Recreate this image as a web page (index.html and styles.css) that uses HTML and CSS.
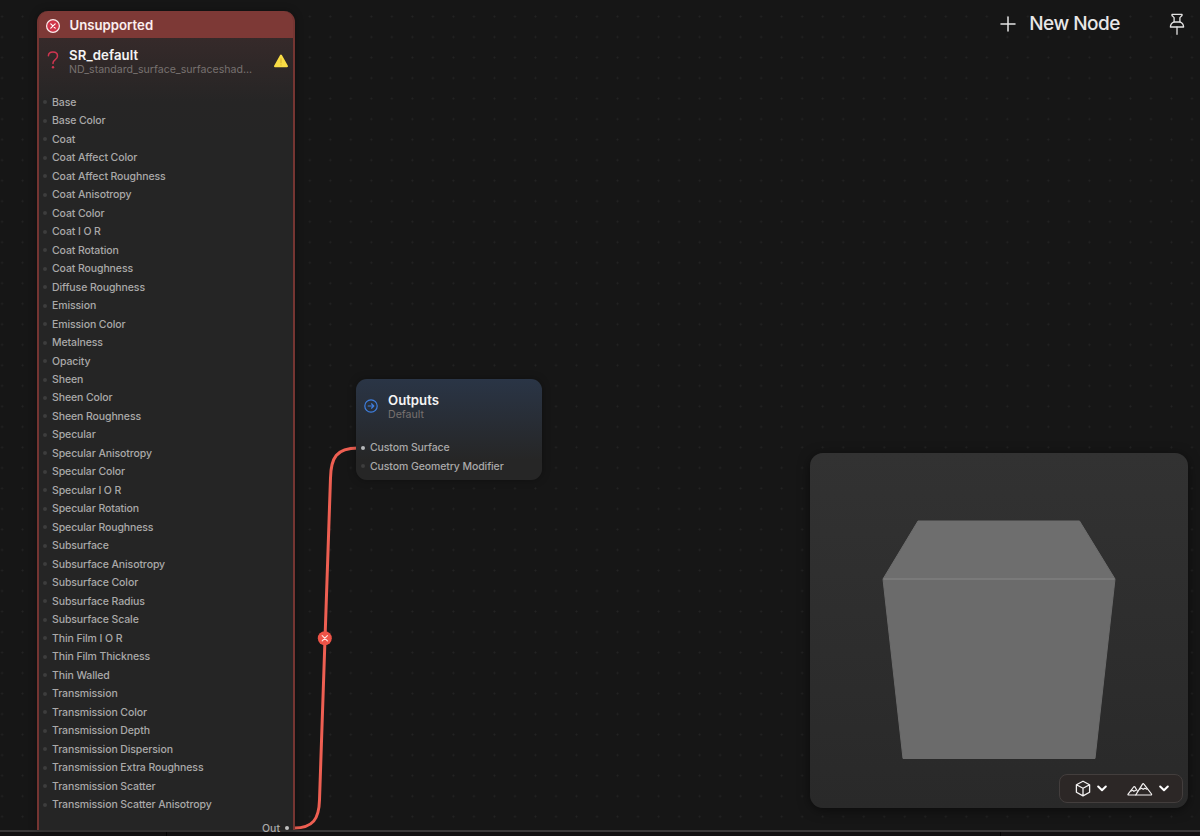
FILE: index.html
```html
<!DOCTYPE html>
<html lang="en">
<head>
    <meta charset="utf-8">
    <title>Shader Graph</title>
    <link rel="stylesheet" href="styles.css">
</head>
<body>
    <div class="app">
        <main class="canvas">
            <svg class="wires" width="1200" height="830" viewBox="0 0 1200 830">
                <path d="M294 828 C313 828 319 819 319.5 800 L330.5 478 C331 458 336 448 358 448"/>
                <circle cx="324.8" cy="638.3" r="7"/>
                <path class="cross" d="M322.2 635.7l5.2 5.2M327.4 635.7l-5.2 5.2"/>
            </svg>

            <section class="node node-unsupported">
                <div class="node-banner">
                    <svg width="16" height="16" viewBox="0 0 16 16">
                        <circle cx="8" cy="8" r="6.4" fill="#cf3549" stroke="#fbeeee" stroke-width="1.2"/>
                        <path d="M5.8 5.8l4.4 4.4M10.2 5.8l-4.4 4.4" stroke="#fff" stroke-width="1.2" stroke-linecap="round"/>
                    </svg>
                    <span>Unsupported</span>
                </div>
                <header class="node-header">
                    <svg class="question" width="12" height="18" viewBox="0 0 12 18">
                        <path d="M1.4 4.8C1.5 2.4 3.3 1 5.9 1c2.7 0 4.6 1.5 4.6 3.9 0 1.9-1 2.9-2.5 3.9C6.500 9.800 6 10.500 6 12v.6" fill="none" stroke="#cf3550" stroke-width="1.5" stroke-linecap="round"/>
                        <circle cx="6" cy="16.2" r="1.200" fill="#cf3550"/>
                    </svg>
                    <div class="node-titles">
                        <h2>SR_default</h2>
                        <p>ND_standard_surface_surfaceshad...</p>
                    </div>
                    <svg class="warning" width="16" height="14" viewBox="0 0 16 14">
                        <path d="M8 1.6L14 12.200H2z" fill="#f9dc45" stroke="#f9dc45" stroke-width="2" stroke-linejoin="round"/>
                        <path d="M8 4.800v4" stroke="#d9b430" stroke-width="1.2" stroke-linecap="round"/>
                        <circle cx="8" cy="10.900" r=".7" fill="#d9b430"/>
                    </svg>
                </header>
                <ul class="ports">
                    <li>Base</li>
                    <li>Base Color</li>
                    <li>Coat</li>
                    <li>Coat Affect Color</li>
                    <li>Coat Affect Roughness</li>
                    <li>Coat Anisotropy</li>
                    <li>Coat Color</li>
                    <li>Coat I O R</li>
                    <li>Coat Rotation</li>
                    <li>Coat Roughness</li>
                    <li>Diffuse Roughness</li>
                    <li>Emission</li>
                    <li>Emission Color</li>
                    <li>Metalness</li>
                    <li>Opacity</li>
                    <li>Sheen</li>
                    <li>Sheen Color</li>
                    <li>Sheen Roughness</li>
                    <li>Specular</li>
                    <li>Specular Anisotropy</li>
                    <li>Specular Color</li>
                    <li>Specular I O R</li>
                    <li>Specular Rotation</li>
                    <li>Specular Roughness</li>
                    <li>Subsurface</li>
                    <li>Subsurface Anisotropy</li>
                    <li>Subsurface Color</li>
                    <li>Subsurface Radius</li>
                    <li>Subsurface Scale</li>
                    <li>Thin Film I O R</li>
                    <li>Thin Film Thickness</li>
                    <li>Thin Walled</li>
                    <li>Transmission</li>
                    <li>Transmission Color</li>
                    <li>Transmission Depth</li>
                    <li>Transmission Dispersion</li>
                    <li>Transmission Extra Roughness</li>
                    <li>Transmission Scatter</li>
                    <li>Transmission Scatter Anisotropy</li>
                </ul>
                <div class="port-out">Out</div>
            </section>

            <section class="node node-outputs">
                <header class="node-header">
                    <svg class="arrow" width="14" height="14" viewBox="0 0 14 14">
                        <g fill="none" stroke="#3f7fe0" stroke-width="1.2" stroke-linecap="round" stroke-linejoin="round">
                            <circle cx="7" cy="7" r="6.2"/>
                            <path d="M4.200 7h5.400M7.500 4.800L9.800 7 7.500 9.200"/>
                        </g>
                    </svg>
                    <div class="node-titles">
                        <h2>Outputs</h2>
                        <p>Default</p>
                    </div>
                </header>
                <ul class="ports">
                    <li class="connected">Custom Surface</li>
                    <li>Custom Geometry Modifier</li>
                </ul>
            </section>

            <div class="toolbar">
                <button class="new-node">
                    <svg width="16" height="16" viewBox="0 0 16 16">
                        <path d="M8 1v14M1 8h14" stroke="#e4e3e3" stroke-width="1.5" stroke-linecap="round"/>
                    </svg>
                    New Node
                </button>
                <button class="pin">
                    <svg width="16" height="23" viewBox="0 0 16 23">
                        <g fill="none" stroke="#e4e3e3" stroke-width="1.3" stroke-linejoin="round" stroke-linecap="round">
                            <path d="M3 1.300h10v1.200L10.900 4.600v4.200c2.300 1 3.700 2.800 3.700 5.200H1.400c0-2.400 1.400-4.200 3.700-5.200V4.600L3 2.500z"/>
                            <path d="M5.100 9h5.800M8 14v7.300"/>
                        </g>
                    </svg>
                </button>
            </div>

            <aside class="preview">
                <svg class="cube" width="236" height="242" viewBox="0 0 236 242">
                    <path d="M36 1h161.500L233 59 1 59z" fill="#6e6e6e" stroke="#6e6e6e" stroke-linejoin="round"/>
                    <path d="M1 59h232L213 238.500H21z" fill="#6b6b6b" stroke="#6b6b6b" stroke-linejoin="round"/>
                    <path d="M1.500 59h231" stroke="#7a7a7a" stroke-width="2"/>
                </svg>
                <div class="preview-controls">
                    <button>
                        <svg width="16" height="17" viewBox="0 0 16 17">
                            <path d="M8 1.200l6.600 3.500v7.600L8 15.900l-6.600-3.600V4.700zM1.400 4.700L8 8.300l6.600-3.600M8 8.300v7.600" fill="none" stroke="#f3f1f1" stroke-width="1.3" stroke-linejoin="round"/>
                        </svg>
                        <svg width="10" height="7" viewBox="0 0 10 7">
                            <path d="M1.200 1.500L5 5.300l3.800-3.800" fill="none" stroke="#fff" stroke-width="2" stroke-linecap="round" stroke-linejoin="round"/>
                        </svg>
                    </button>
                    <button>
                        <svg width="26" height="14" viewBox="0 0 26 14">
                            <g fill="none" stroke="#f3f1f1" stroke-width="1.2" stroke-linejoin="round" stroke-linecap="round">
                                <path d="M8.700 13L15.500 2.100q.7-1 1.400 0L24.500 12q.4 1-.6 1z"/>
                                <path d="M8.700 13H1.600q-1 0-.5-.9L6.600 5q.7-.8 1.400 0l2.300 4"/>
                                <path d="M12.700 7.200l1.900-1 1.600 1.100 1.700-1.100 2 .9M4.100 9.100l1.400-.8 1.400 1 1.500-.9"/>
                            </g>
                        </svg>
                        <svg width="10" height="7" viewBox="0 0 10 7">
                            <path d="M1.200 1.500L5 5.300l3.800-3.800" fill="none" stroke="#fff" stroke-width="2" stroke-linecap="round" stroke-linejoin="round"/>
                        </svg>
                    </button>
                </div>
            </aside>
        </main>
        <footer class="bottom-panels">
            <div></div>
            <div></div>
            <div></div>
        </footer>
    </div>
</body>
</html>
```
FILE: styles.css
```css
* {
    box-sizing: border-box;
}
body {
    margin: 0;
    background-color: #161616;
    font-family: Inter, "Liberation Sans", sans-serif;
}
h2, p, ul {
    margin: 0;
    padding: 0;
}
svg {
    display: block;
    flex: none;
}
button {
    display: flex;
    align-items: center;
    padding: 0;
    border: none;
    background: none;
    color: #e8e7e7;
    font-family: inherit;
}
.app {
    display: flex;
    flex-direction: column;
    height: 836px;
}
.canvas {
    position: relative;
    z-index: 1;
    flex: 1;
    background-color: #161616;
    background-image: radial-gradient(circle, #242424 0.6px, transparent 1.4px);
    background-size: 20.52px 20.52px;
    background-position: -8.2px 6.3px;
}
.wires {
    position: absolute;
    top: 0;
    left: 0;
}
.wires path {
    fill: none;
    stroke: #ee5f52;
    stroke-width: 3;
}
.wires circle {
    fill: #ee5347;
}
.wires .cross {
    stroke: #ffe3df;
    stroke-width: 1.2;
    stroke-linecap: round;
}

/* Nodes */
.node {
    position: absolute;
    box-shadow: 0 0 8px rgba(0, 0, 0, 0.3);
}
.node-unsupported {
    left: 37px;
    top: 11px;
    width: 258px;
    height: 819px;
    border: 2px solid #753532;
    border-width: 0 2px;
    border-radius: 11px 11px 0 0;
    background: linear-gradient(#362a2a 26px, #262525 90px, #252525 130px);
}
.node-banner {
    display: flex;
    align-items: center;
    gap: 8.5px;
    height: 27px;
    padding: 2px 0 0 6px;
    border-radius: 9px 9px 0 0;
    background-color: #7d3936;
    color: #fbeeee;
    font-size: 13.2px;
    font-weight: 600;
    line-height: 16px;
}
.node-banner span {
    margin-top: -1px;
}
.node-header {
    display: flex;
}
.node-unsupported .node-header {
    height: 55px;
    padding: 9px 4px 0 8px;
}
.question {
    margin: 4px 10px 0 0;
}
.warning {
    margin: 7px 0 0 auto;
}
.node h2 {
    color: #f4f3f3;
    font-size: 13.2px;
    font-weight: 600;
    line-height: 16px;
}
.node-unsupported h2 {
    letter-spacing: 0.1px;
}
.node p {
    color: #77716f;
    font-size: 10.6px;
    line-height: 13px;
}
.ports {
    list-style: none;
}
.ports li {
    display: flex;
    align-items: center;
    height: 18.49px;
    color: #aaa9a9;
    font-size: 10.5px;
    font-weight: 500;
    letter-spacing: -0.1px;
}
.ports li::before {
    content: "";
    width: 4px;
    height: 4px;
    margin-right: 5px;
    border-radius: 50%;
    background-color: #3d3d3d;
}
.ports .connected::before {
    background-color: #b5b7ba;
}
.node-unsupported .ports {
    padding-left: 4px;
}
.port-out {
    display: flex;
    justify-content: flex-end;
    align-items: center;
    gap: 5px;
    height: 18px;
    margin-top: 5.5px;
    padding-right: 4px;
    color: #aaa9a9;
    font-size: 10.5px;
    font-weight: 500;
}
.port-out::after {
    content: "";
    width: 4px;
    height: 4px;
    border-radius: 50%;
    background-color: #c0c0c0;
}
.node-outputs {
    left: 356px;
    top: 379px;
    width: 186px;
    height: 101px;
    border-radius: 11px;
    background: linear-gradient(#2a3546, #262626 80%);
}
.node-outputs .node-header {
    height: 59.5px;
    padding: 13px 0 0 8px;
}
.arrow {
    margin: 7px 10px 0 0;
}
.node-outputs .ports {
    padding-left: 5px;
}

/* New node and pin buttons */
.toolbar {
    position: absolute;
    top: 11px;
    right: 15px;
    display: flex;
    align-items: center;
    gap: 49px;
}
.new-node {
    gap: 13.5px;
    font-size: 19px;
    font-weight: 500;
    line-height: 26px;
    letter-spacing: -0.5px;
}

/* Material preview */
.preview {
    position: absolute;
    right: 12px;
    bottom: 22px;
    display: flex;
    flex-direction: column;
    width: 378px;
    height: 355px;
    padding: 67px 5px 5px;
    border-radius: 13px;
    background: linear-gradient(#323232, #292929);
    box-shadow: 0 2px 12px rgba(0, 0, 0, 0.5);
}
.cube {
    margin-left: 67px;
}
.preview-controls {
    display: flex;
    align-items: center;
    align-self: flex-end;
    gap: 20px;
    height: 29px;
    margin-top: auto;
    padding: 0 13px 0 15px;
    border: 1px solid #433e3d;
    border-radius: 8px;
    background-color: #2c2726;
}
.preview-controls button {
    gap: 6px;
}

.bottom-panels {
    display: grid;
    grid-template-columns: 166px 833px 1fr;
    gap: 1px;
    height: 6px;
    border-top: 2px solid #3a3939;
    background-color: #050505;
}
.bottom-panels div {
    background-color: #131213;
}
```
